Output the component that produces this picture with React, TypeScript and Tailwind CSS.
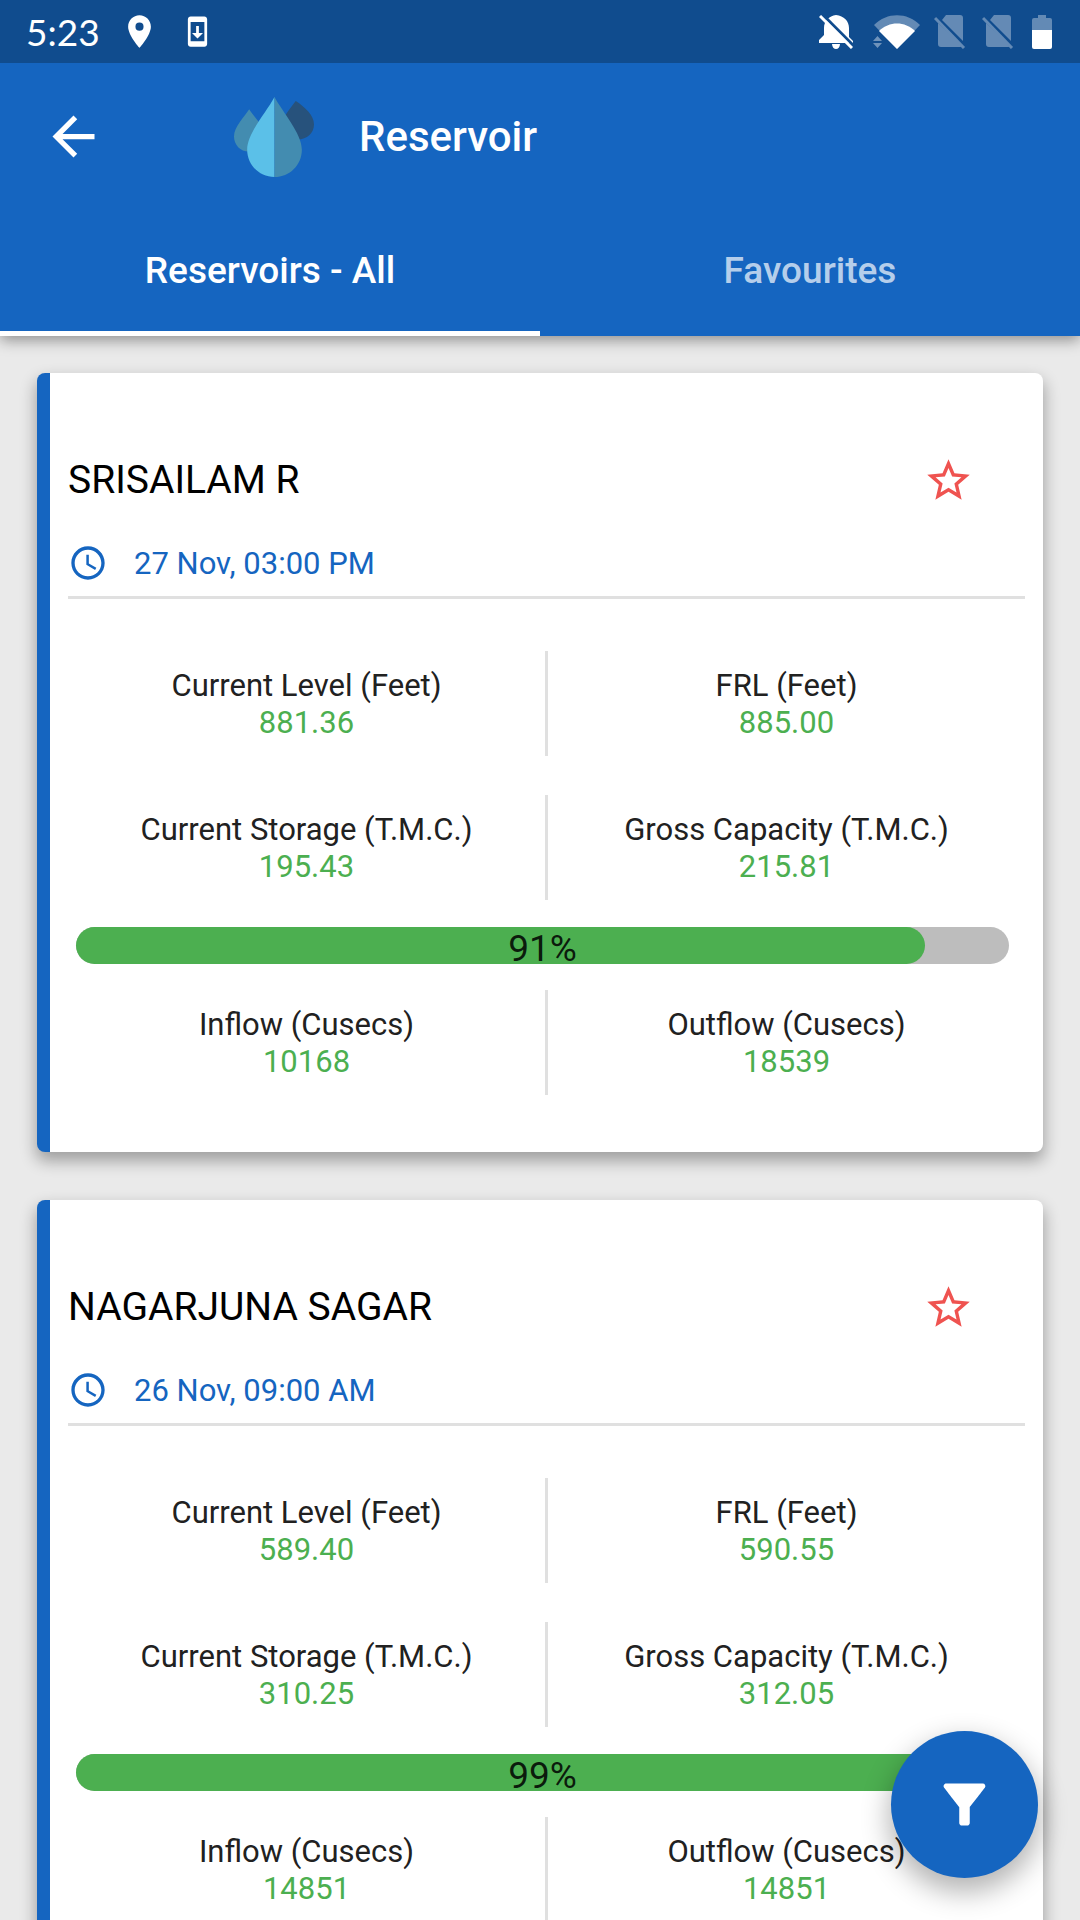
import React, { useState } from 'react';
import { MdAccessTime, MdArrowBack, MdFilterAlt, MdPlace, MdStar, MdStarBorder, MdSystemUpdate } from 'react-icons/md';

interface Reservoir {
  id: string;
  name: string;
  updatedAt: string;
  currentLevel: string;
  frl: string;
  currentStorage: string;
  grossCapacity: string;
  percent: number;
  inflow: string;
  outflow: string;
}

const reservoirs: Reservoir[] = [
  {
    id: 'srisailam',
    name: 'SRISAILAM R',
    updatedAt: '27 Nov, 03:00 PM',
    currentLevel: '881.36',
    frl: '885.00',
    currentStorage: '195.43',
    grossCapacity: '215.81',
    percent: 91,
    inflow: '10168',
    outflow: '18539',
  },
  {
    id: 'nagarjuna',
    name: 'NAGARJUNA SAGAR',
    updatedAt: '26 Nov, 09:00 AM',
    currentLevel: '589.40',
    frl: '590.55',
    currentStorage: '310.25',
    grossCapacity: '312.05',
    percent: 99,
    inflow: '14851',
    outflow: '14851',
  },
];

const BellOff = () => (
  <svg width="34" height="34" viewBox="0 0 34 34" fill="white" aria-hidden="true">
    <path d="M17 0C10 1 5 6 5 13v7l-5 5v3h34v-2l-4-4v-9C30 6 25 1 17 0z" />
    <path d="M13 29h8c0 3-2 5-4 5s-4-2-4-5z" />
    <path d="M4 0l31 31" stroke="#104c8e" strokeWidth="3" />
    <path d="M1 1l32 32" stroke="white" strokeWidth="3" />
  </svg>
);

const Wifi = () => (
  <svg width="48" height="34" viewBox="0 0 48 34" fill="white" aria-hidden="true">
    <path d="M24 34L1 10C14 -3 34 -3 47 10z" opacity=".35" />
    <path d="M24 34L6 16C16 6 32 6 42 16z" />
    <path d="M0 26l4.500-5 4.500 5zM0 28h9l-4.500 5z" opacity=".4" />
  </svg>
);

const SimOff = () => (
  <svg width="32" height="34" viewBox="0 0 32 34" aria-hidden="true">
    <g opacity=".35">
      <path d="M12 0h14q3 0 3 3v23L8 5zM4 8l24 23q-1 1-2 1H7q-3 0-3-3z" fill="white" />
      <path d="M1 3l29 30" stroke="white" strokeWidth="3" />
    </g>
  </svg>
);

const Battery = () => (
  <svg width="20" height="34" viewBox="0 0 20 34" fill="white" aria-hidden="true">
    <path d="M6 0h8v3h4q2 0 2 2v10H0V5q0-2 2-2h4z" opacity=".35" />
    <path d="M0 15h20v17q0 2-2 2H2q-2 0-2-2z" />
  </svg>
);

const DropsLogo = () => (
  <svg width="80" height="80" viewBox="0 0 79 79" aria-hidden="true">
    <path d="M15 12C10 20 0 29 0 39c0 8 6 15 15 15 8 0 15-7 15-15 0-10-10-19-15-27z" fill="#438cb0" />
    <path d="M61 4C55 12 47 21 47 29c0 7 5 13 16 13 9 0 16-6 16-15 0-9-9-17-18-23z" fill="#27527c" />
    <path d="M40 0C32 15 13 36 13 52c0 15 12 27 27 27z" fill="#5bc0e8" />
    <path d="M40 0c8 15 27 36 27 52 0 15-12 27-27 27z" fill="#438cb0" />
  </svg>
);

const StatusBar = () => (
  <div className="flex h-[63px] items-center justify-between bg-[#104c8e] pr-7 pl-[26px] text-white">
    <div className="flex items-center">
      <span className="font-['Lato',sans-serif] text-[37px] leading-[48px]">5:23</span>
      <MdPlace className="ml-5 size-[39px]" />
      <MdSystemUpdate className="ml-[22px] size-[33px]" />
    </div>
    <div className="flex items-center">
      <BellOff />
      <div className="ml-5 flex"><Wifi /></div>
      <div className="ml-[13px] flex gap-4">
        <SimOff />
        <SimOff />
      </div>
      <div className="ml-[18px] flex"><Battery /></div>
    </div>
  </div>
);

const Stat = ({ label, value }: { label: string; value: string }) => (
  <div className="flex-1 pt-4 text-center text-[31px] leading-[37px]">
    <dt className="text-[#212121]">{label}</dt>
    <dd className="text-[#4caf50]">{value}</dd>
  </div>
);

const StatRow = ({ children }: { children: React.ReactNode }) => {
  const [left, right] = React.Children.toArray(children);
  return (
    <dl className="flex h-[105px]">
      {left}
      <div className="w-[3px] bg-[#e0e0e0]" />
      {right}
    </dl>
  );
};

const ReservoirCard = ({ reservoir }: { reservoir: Reservoir }) => {
  const [favourite, setFavourite] = useState(false);

  return (
    <article className="overflow-hidden rounded-lg border-l-[13px] border-[#1565c0] bg-white px-[18px] pt-[75px] pb-[57px] shadow-[0_8px_16px_1px_rgba(0,0,0,0.32)]">
      <div className="flex h-16 items-center justify-between">
        <h2 className="text-[39px] leading-[48px] text-black">{reservoir.name}</h2>
        <button
          type="button"
          aria-label={`Add ${reservoir.name} to favourites`}
          aria-pressed={favourite}
          onClick={() => setFavourite(!favourite)}
          className="mr-[45px] flex size-16 items-center justify-center text-[#ef5350]"
        >
          {favourite ? <MdStar className="size-[51px]" /> : <MdStarBorder className="size-[51px]" />}
        </button>
      </div>

      <div className="mt-[31px] flex h-[56px] items-start border-b-[3px] border-[#e0e0e0] text-[#1565c0]">
        <MdAccessTime className="size-10" />
        <time className="ml-[26px] text-[31px] leading-[42px]">{reservoir.updatedAt}</time>
      </div>

      <div className="mt-[52px] flex flex-col gap-[39px]">
        <StatRow>
          <Stat label="Current Level (Feet)" value={reservoir.currentLevel} />
          <Stat label="FRL (Feet)" value={reservoir.frl} />
        </StatRow>
        <StatRow>
          <Stat label="Current Storage (T.M.C.)" value={reservoir.currentStorage} />
          <Stat label="Gross Capacity (T.M.C.)" value={reservoir.grossCapacity} />
        </StatRow>
      </div>

      <div
        role="progressbar"
        aria-label="Storage filled"
        aria-valuenow={reservoir.percent}
        className="relative mt-[27px] mr-4 mb-[26px] ml-2 h-[37px] rounded-full bg-[#bdbdbd]"
      >
        <div className="h-full rounded-full bg-[#4caf50]" style={{ width: `${reservoir.percent}%` }} />
        <span className="absolute inset-x-0 top-0 text-center text-[37px] leading-[44px] text-black/85">
          {reservoir.percent}%
        </span>
      </div>

      <StatRow>
        <Stat label="Inflow (Cusecs)" value={reservoir.inflow} />
        <Stat label="Outflow (Cusecs)" value={reservoir.outflow} />
      </StatRow>
    </article>
  );
};

const tabs = ['Reservoirs - All', 'Favourites'];

export default function App() {
  const [activeTab, setActiveTab] = useState(tabs[0]);

  return (
    <div className="relative flex h-screen flex-col overflow-hidden bg-[#eaeaea] font-['Roboto',sans-serif]">
      <header className="z-10 bg-[#1565c0] text-white shadow-[0_4px_14px_rgba(0,0,0,0.4)]">
        <StatusBar />
        <div className="flex h-[147px] items-center pl-[42px]">
          <button type="button" aria-label="Back">
            <MdArrowBack className="size-[63px]" />
          </button>
          <div className="ml-[129px]">
            <DropsLogo />
          </div>
          <h1 className="ml-[45px] text-[42px] leading-[48px] font-medium">Reservoir</h1>
        </div>
        <div role="tablist" className="grid grid-cols-2">
          {tabs.map((tab) => (
            <button
              key={tab}
              type="button"
              role="tab"
              aria-selected={tab === activeTab}
              onClick={() => setActiveTab(tab)}
              className={`h-[126px] border-b-[5px] pt-[5px] pb-1 text-[37px] leading-[44px] font-medium ${
                tab === activeTab ? 'border-white text-white' : 'border-transparent text-white/70'
              }`}
            >
              {tab}
            </button>
          ))}
        </div>
      </header>

      <main className="flex-1 overflow-y-auto px-[37px] pt-[37px] pb-12 [scrollbar-width:none]">
        <div className="flex flex-col gap-12">
          {reservoirs.map((reservoir) => (
            <ReservoirCard key={reservoir.id} reservoir={reservoir} />
          ))}
        </div>
      </main>

      <button
        type="button"
        aria-label="Filter"
        className="absolute right-[42px] bottom-[42px] flex size-[147px] items-center justify-center rounded-full bg-[#1565c0] text-white shadow-[0_12px_28px_2px_rgba(0,0,0,0.3)]"
      >
        <MdFilterAlt className="size-[63px]" />
      </button>
    </div>
  );
}
